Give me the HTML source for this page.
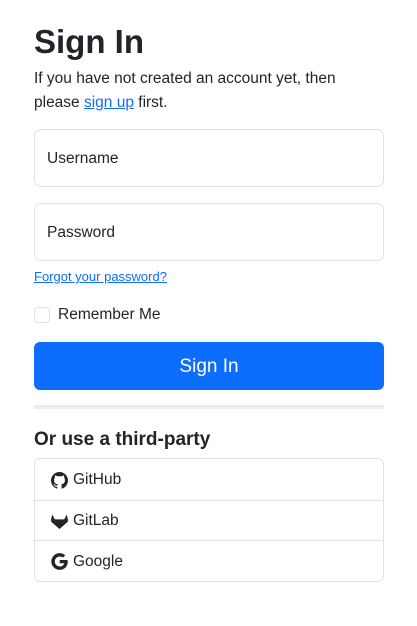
<!DOCTYPE html>
<html><head><meta charset="utf-8"><style>
*{box-sizing:border-box;margin:0;padding:0}
body{width:417px;height:626px;background:#fff;font-family:"Liberation Sans",sans-serif;color:#212529;position:relative}
.a{position:absolute;left:34px}
h1{font-size:33px;font-weight:700;top:23px;line-height:38px}
.intro{top:66px;font-size:15.5px;line-height:24px;width:340px;padding-top:1px}
a{color:#0d6efd}
.inp{width:350px;height:58px;border:1px solid #dee2e6;border-radius:7px;font-size:15.5px;padding-left:12px;line-height:58px}
.btn{top:342px;width:350px;height:48px;background:#0d6efd;border-radius:6px;color:#fff;font-size:19px;text-align:center;line-height:50px}
.hr{top:405px;width:350px;height:4px;background:#e9ecef}
.list{top:458px;width:350px;border:1px solid #dee2e6;border-radius:6px}
.item{height:40.5px;border-top:1px solid #dee2e6;font-size:15.5px;display:flex;align-items:center;padding-left:16px;padding-top:2px}
.item:first-child{border-top:0}
.item svg{width:17px;height:17px;margin-right:5px}
</style></head><body>
<h1 class="a">Sign In</h1>
<div class="a intro">If you have not created an account yet, then please <a href="#">sign up</a> first.</div>
<div class="a inp" style="top:129px">Username</div>
<div class="a inp" style="top:203px">Password</div>
<div class="a" style="top:269px;font-size:13px"><a href="#">Forgot your password?</a></div>
<div class="a" style="top:306px;display:flex;align-items:center;font-size:15.5px"><span style="width:16px;height:16px;border:1px solid #dee2e6;border-radius:4px;margin-right:8px;display:inline-block"></span>Remember Me</div>
<div class="a btn">Sign In</div>
<div class="a hr"></div>
<div class="a" style="top:429px;font-size:19px;font-weight:700">Or use a third-party</div>
<div class="a list">
<div class="item"><svg viewBox="0 0 16 16"><path fill="#212529" d="M8 0C3.58 0 0 3.58 0 8c0 3.540 2.29 6.53 5.47 7.590.4.07.55-.17.55-.38v-1.33c-2.23.48-2.7-1.07-2.7-1.07-.36-.92-.89-1.17-.89-1.17-.73-.5.06-.49.06-.49.8.06 1.23.82 1.23.82.71 1.22 1.870.87 2.33.66.07-.52.28-.87.51-1.07-1.78-.2-3.64-.89-3.64-3.95 0-.87.31-1.59.82-2.15-.08-.2-.36-1.02.08-2.12 0 0 .67-.21 2.2.82a7.5 7.5 0 0 1 4 0c1.53-1.04 2.2-.82 2.2-.82.44 1.1.16 1.92.08 2.12.51.56.82 1.27.82 2.15 0 3.07-1.87 3.75-3.65 3.95.29.25.54.73.54 1.48v2.2c0 .21.15.46.55.38A8 8 0 0 0 16 8c0-4.42-3.58-8-8-8z"/></svg>GitHub</div>
<div class="item"><svg viewBox="0 0 16 16"><path fill="#212529" d="M1.2 1.5 0 6.3l.3 2L8 15l7.7-6.7.3-2-1.2-4.8L12.4 6H3.6z"/></svg>GitLab</div>
<div class="item"><svg viewBox="0 0 16 16"><path fill="#212529" d="M15.5 6.6H8.2v3h4.2c-.4 2-2.1 3.1-4.2 3.1A4.7 4.7 0 0 1 8.2 3.3c1.2 0 2.2.4 3 1.1l2.2-2.2A7.8 7.8 0 0 0 8.2.1a7.9 7.9 0 1 0 0 15.8c4 0 7.6-2.9 7.6-7.9 0-.5-.1-1-.3-1.4z"/></svg>Google</div>
</div>
</body></html>
